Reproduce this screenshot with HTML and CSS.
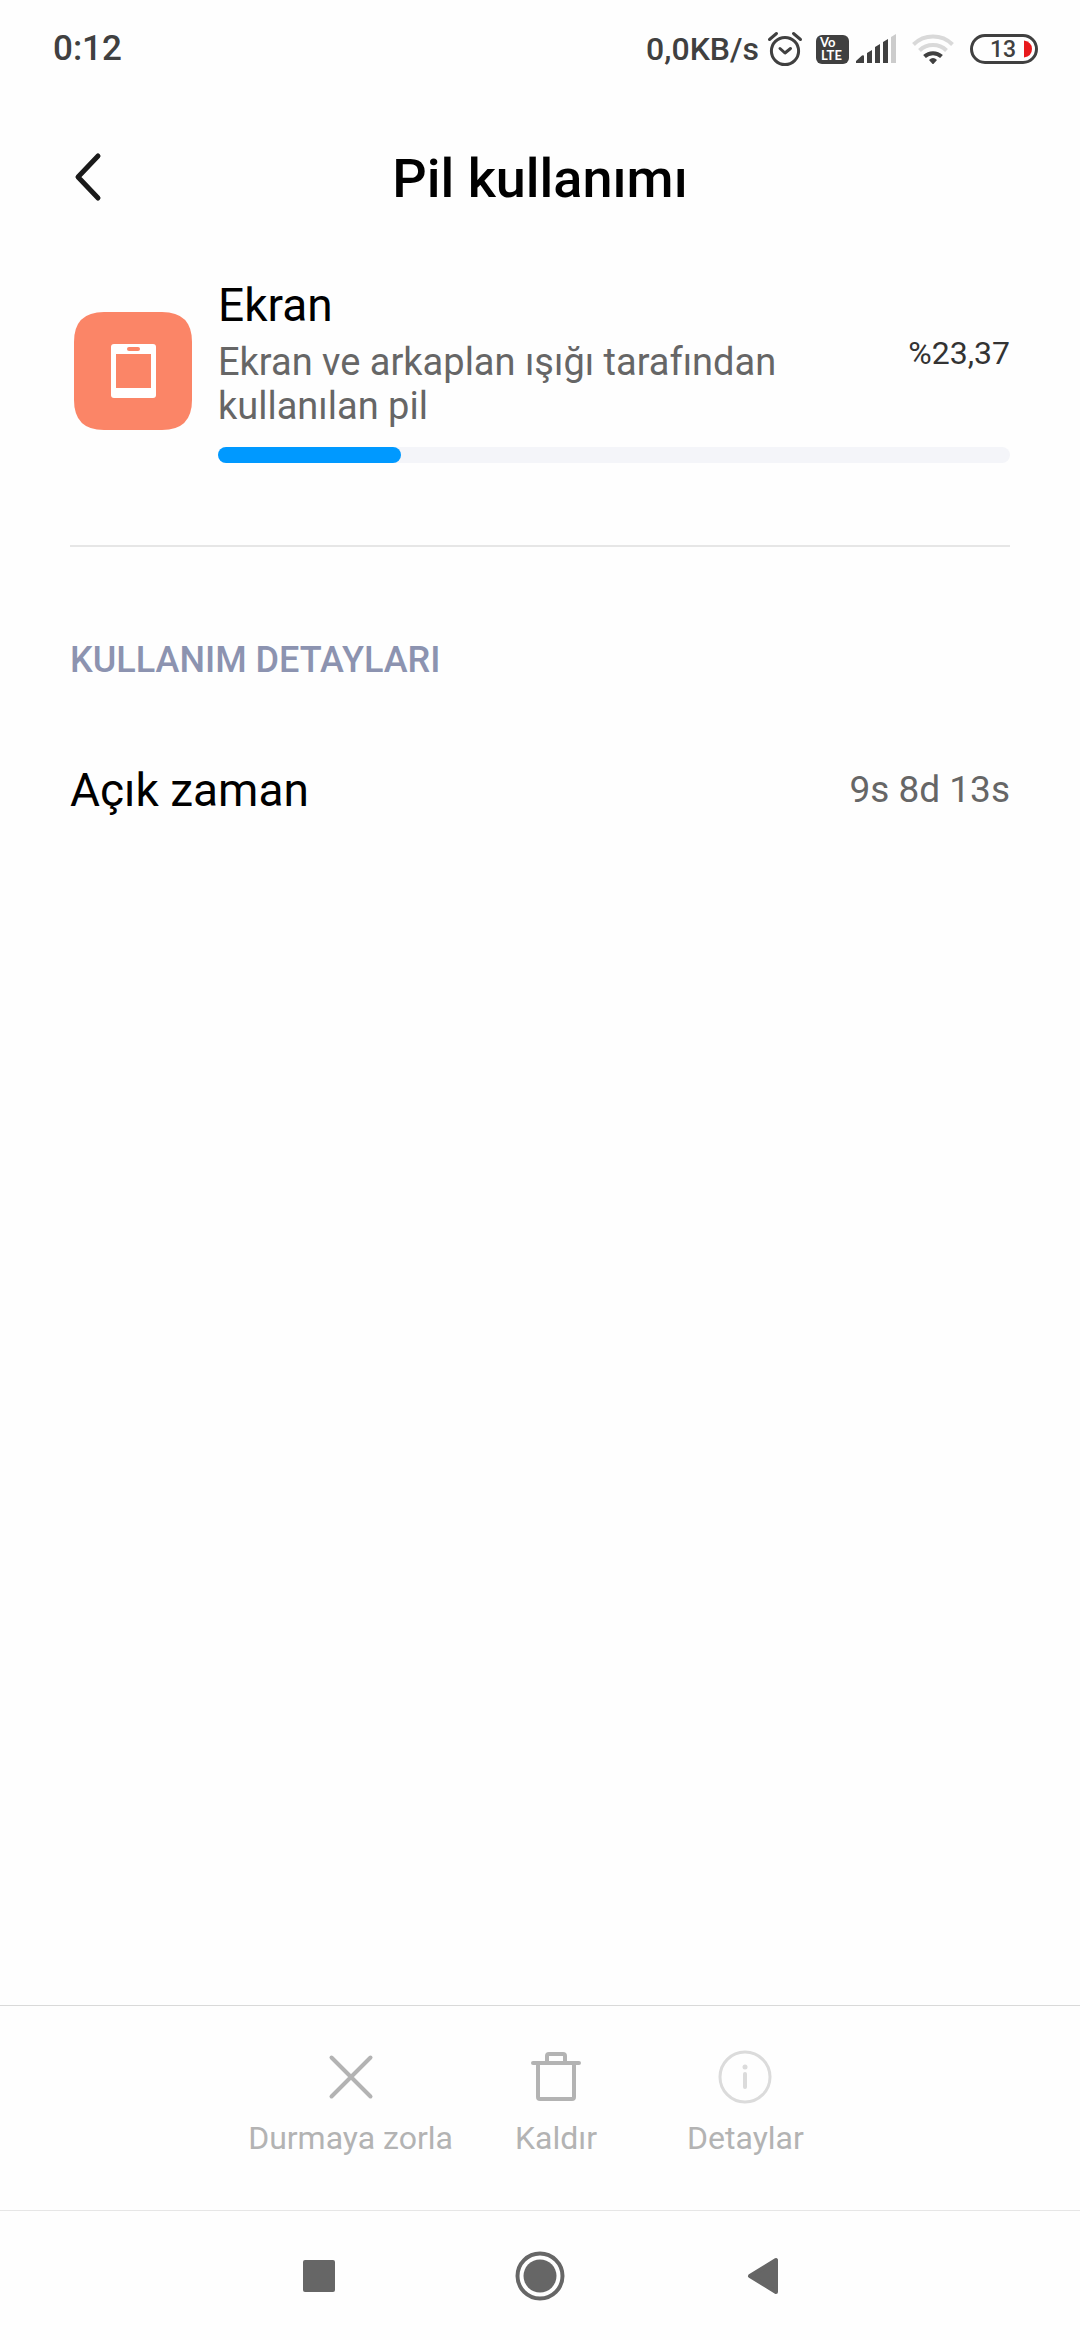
FILE: index.html
```html
<!DOCTYPE html>
<html lang="tr">
<head>
	<meta charset="utf-8">
	<meta name="viewport" content="width=device-width, initial-scale=1">
	<title>Pil kullanımı</title>
	<link rel="stylesheet" href="styles.css">
</head>
<body>
<div class="status">
	<span class="clock">0:12</span>
	<span class="speed">0,0KB/s</span>
	<svg class="alarm" width="36" height="36" viewBox="0 0 36 36" fill="none" stroke="#404040" stroke-width="3" stroke-linecap="round" stroke-linejoin="round">
		<circle cx="18" cy="20" r="13.6"/>
		<path d="M13 17.5l5 4.5 5.500-4.500M2.500 8.500l7-6M33.500 8.500l-7-6"/>
	</svg>
	<svg class="volte" width="33" height="30" viewBox="0 0 33 30">
		<rect width="33" height="29" y="1" rx="6" fill="#404040"/>
		<text x="4" y="13" class="volte-text">Vo</text>
		<text x="5" y="26" class="volte-text">LTE</text>
	</svg>
	<svg class="signal" width="40" height="30" viewBox="0 0 40 30" fill="#404040">
		<path d="M0 29v-2l6-5.500q2-1 2 1V29zM11 29V19l5-3V29zM19 29V13l5-3V29zM27 29V8l5-3V29z"/>
		<path fill="#ccc" d="M35 29V3l5-3V29z"/>
	</svg>
	<svg class="wifi" width="42" height="30" viewBox="0 0 42 30" fill="none" stroke="#d9d9d9" stroke-width="4">
		<path d="M1.500 10.500a28 28 0 0 1 39 0"/>
		<path d="M7.500 16.500a19.500 19.500 0 0 1 27 0"/>
		<path stroke="#404040" d="M12.500 22.500a12.500 12.500 0 0 1 17 0"/>
		<path stroke="none" fill="#404040" d="M17 26q4-4 8 0l-4 4.500z"/>
	</svg>
	<svg class="battery" width="68" height="30" viewBox="0 0 68 30">
		<rect x="1.500" y="1.500" width="65" height="27" rx="13.500" fill="none" stroke="#404040" stroke-width="3"/>
		<text x="20" y="23" class="battery-text">13</text>
		<path fill="#e8191c" d="M54 6.500q8 1.500 8 8.500t-8 8.500z"/>
	</svg>
</div>

<header class="topbar">
	<button class="back" type="button" aria-label="Geri">
		<svg width="28" height="50" viewBox="0 0 28 50" fill="none" stroke="#1a1a1a" stroke-width="5" stroke-linecap="round" stroke-linejoin="round"><path d="M24 4L4 25l20 21"/></svg>
	</button>
	<h1 class="title">Pil kullanımı</h1>
</header>

<main>
	<section class="usage">
		<svg class="app-icon" width="118" height="118" viewBox="0 0 118 118">
			<path fill="#fb8567" d="M30 0h58Q118 0 118 30v58q0 30-30 30H30Q0 118 0 88V30Q0 0 30 0z"/>
			<rect x="37" y="32" width="45" height="54" rx="3" fill="#fff"/>
			<rect x="42" y="42" width="35" height="34" fill="#fb8567"/>
			<rect x="53" y="35" width="13" height="4" rx="2" fill="#fb8567"/>
		</svg>
		<div class="usage-body">
			<div class="usage-row">
				<div class="usage-text">
					<h2 class="name">Ekran</h2>
					<p class="desc">Ekran ve arkaplan ışığı tarafından kullanılan pil</p>
				</div>
				<span class="percent">%23,37</span>
			</div>
			<div class="bar"><div class="bar-fill" style="width: 23.1%"></div></div>
		</div>
	</section>
	<section class="details">
		<h3 class="section">KULLANIM DETAYLARI</h3>
		<dl class="detail">
			<dt>Açık zaman</dt>
			<dd>9s 8d 13s</dd>
		</dl>
	</section>
</main>

<footer class="actions">
	<button class="action" type="button" disabled>
		<svg width="54" height="54" viewBox="0 0 54 54" fill="none" stroke="#b3b3b3" stroke-width="4" stroke-linecap="round"><path d="M7.500 7.500l39 39M46.500 7.500l-39 39"/></svg>
		Durmaya zorla
	</button>
	<button class="action" type="button" disabled>
		<svg width="54" height="54" viewBox="0 0 54 54" fill="none" stroke="#b3b3b3" stroke-width="4" stroke-linecap="round" stroke-linejoin="round"><path d="M4 13h46M9 13v34q0 2 2 2h32q2 0 2-2V13M18 13V6q0-2 2-2h14q2 0 2 2v7"/></svg>
		Kaldır
	</button>
	<button class="action action-details" type="button" disabled>
		<svg width="54" height="54" viewBox="0 0 54 54" fill="none" stroke="#dbdbdb" stroke-width="3" stroke-linecap="round"><circle cx="27" cy="27" r="25"/><path stroke-width="4" d="M27 24v13"/><circle cx="27" cy="17" r="2.500" fill="#dbdbdb" stroke="none"/></svg>
		Detaylar
	</button>
</footer>

<nav class="navbar">
	<button type="button" aria-label="Son uygulamalar"><svg width="54" height="54" viewBox="0 0 54 54" fill="#666"><rect x="12" y="11" width="32" height="32" rx="2"/></svg></button>
	<button type="button" aria-label="Ana ekran"><svg width="54" height="54" viewBox="0 0 54 54" fill="#666"><circle cx="27" cy="27" r="16.500"/><circle cx="27" cy="27" r="22.500" fill="none" stroke="#666" stroke-width="4"/></svg></button>
	<button type="button" aria-label="Geri"><svg width="54" height="54" viewBox="0 0 54 54" fill="#666" stroke="#666" stroke-width="4" stroke-linejoin="round"><path d="M15 27l26-16v32z"/></svg></button>
</nav>
</body>
</html>
```
FILE: styles.css
```css
* { box-sizing: border-box; margin: 0; padding: 0; }
body { display: flex; flex-direction: column; min-height: 100vh; background-color: #fefefe; color: #000; font-family: Roboto, "Liberation Sans", sans-serif; }
button { border: 0; background: none; font: inherit; color: inherit; }
svg { display: block; flex: none; }

.status { display: flex; align-items: center; height: 97px; padding: 0 42px 0 53px; color: #404040; font-weight: 500; }
.clock { flex: 1; font-size: 35px; line-height: 42px; }
.speed { font-size: 32px; line-height: 42px; }
.alarm { margin-left: 8px; }
.volte { margin-left: 13px; }
.signal { margin-left: 7px; }
.wifi { margin-left: 16px; }
.battery { margin-left: 16px; }
.volte-text { font: 700 13px Lato, sans-serif; fill: #fff; }
.battery-text { font: 500 23px Roboto, sans-serif; fill: #404040; }

.topbar { display: grid; grid-template-columns: 100px 1fr 100px; align-items: center; height: 159px; padding: 0 40px; }
.back { justify-self: start; padding: 10px 34px; }
.title { padding-top: 4px; font-size: 54px; line-height: 64px; font-weight: 500; text-align: center; }

main { flex: 1; padding: 22px 70px; }
.usage { display: flex; align-items: center; gap: 26px; padding: 0 0 82px 4px; border-bottom: 2px solid #e6e6e6; }
.usage-body { flex: 1; }
.usage-row { display: flex; align-items: center; justify-content: space-between; }
.usage-text { max-width: 600px; }
.name { margin-bottom: 8px; font-size: 46px; line-height: 54px; font-weight: 400; }
.desc { font-size: 38px; line-height: 44px; color: #666; }
.percent { font-size: 32px; line-height: 40px; color: #333; }
.bar { height: 16px; margin-top: 19px; border-radius: 8px; background-color: #f4f5f9; }
.bar-fill { height: 100%; border-radius: 8px; background-color: #0099ff; }
.section { margin-top: 91px; font-size: 36px; line-height: 44px; font-weight: 500; color: #8c93b0; }
.detail { display: flex; align-items: center; justify-content: space-between; margin-top: 81px; }
.detail dt { font-size: 46px; line-height: 54px; }
.detail dd { font-size: 37px; line-height: 44px; color: #666; }

.actions { display: flex; justify-content: center; gap: 62px; height: 205px; padding-top: 44px; border-top: 1px solid #d9d9d9; }
.action { display: flex; flex-direction: column; align-items: center; gap: 14px; color: #b3b3b3; font-size: 32px; line-height: 40px; }
.action-details { padding: 0 28px; }

.navbar { display: flex; justify-content: center; height: 130px; border-top: 1px solid #e6e6e6; }
.navbar button { display: flex; align-items: center; justify-content: center; width: 222px; }
```
